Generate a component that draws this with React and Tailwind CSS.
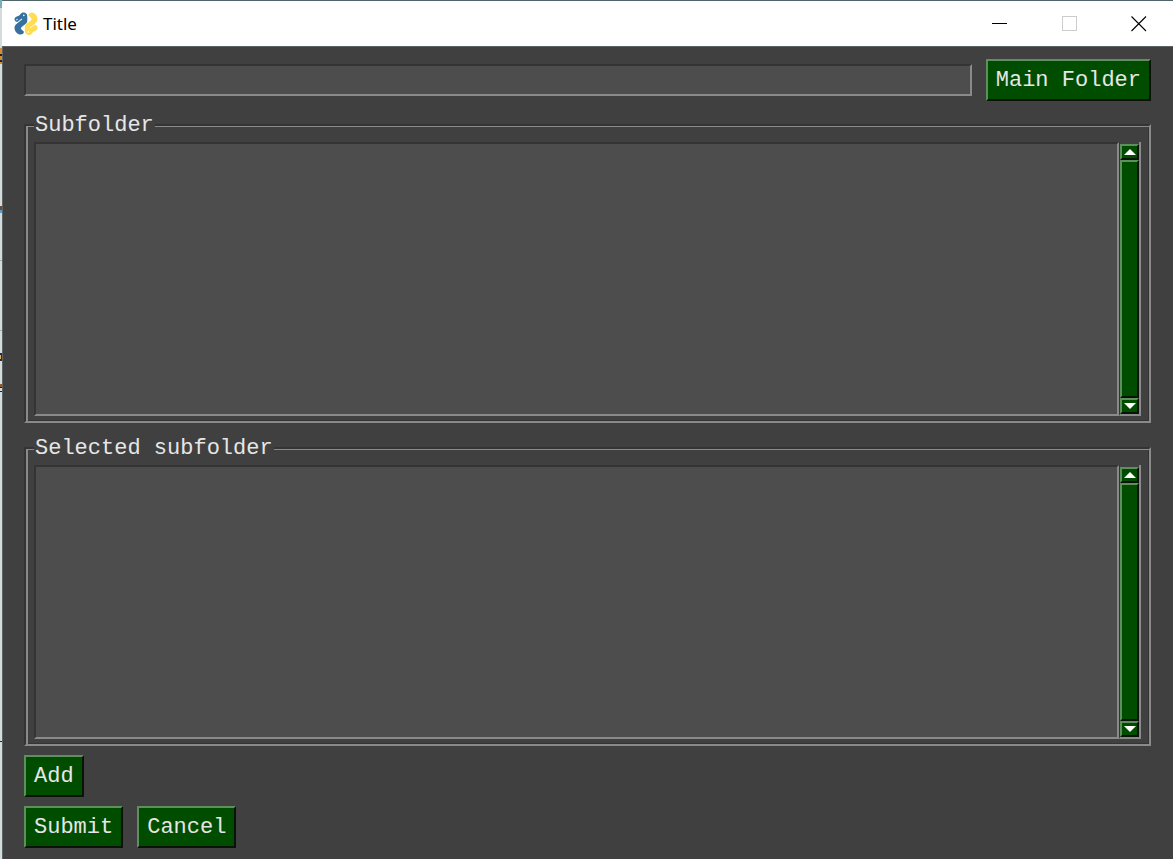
import React from "react";

function PythonLogo() {
  return (
    <svg viewBox="0 0 24 24" className="h-6 w-6" aria-hidden="true">
      <path
        d="M6.500 2C7.500.3 9.500 0 11 .8 12.800 1.600 13.300 3 13.300 4.600V8.500C13.300 10.200 12.500 11.300 11.200 12.300L8 14.800C6.900 15.700 6.600 16.500 7.200 17.300L9.800 19.500C10.300 21.500 8 23 5.500 22.500 2.600 21.800.5 19 .5 15.800.5 13.500 2 12.200 3.600 11L8.300 7.300 7.800 6.600 3.300 10.100C1.200 9.900.3 8.400.6 6.600 1 4.400 3.300 4.600 4.700 3.700 5.600 3.200 6 2.700 6.500 2Z"
        fill="#3670a0"
      />
      <path
        d="M14.300 3.200C15 1.100 16.900.2 18.700.7 21.400 1.400 23.500 4 23.500 7.100 23.500 9.400 22.400 10.700 20.800 11.900L15.700 15.600 16.200 16.300 20.800 12.800C22.800 13 23.800 14.600 23.500 16.500 23.200 18.700 20.900 18.800 19.500 19.800 18.300 20.700 18 22.200 16.500 22.800 13.500 23.800 10.800 21.800 10.800 18.800V15C10.800 13.400 11.600 12.400 12.800 11.500L16.700 8.400C17.700 7.600 17.800 6.700 17 6Z"
        fill="#ffdc52"
      />
      <circle cx="9.800" cy="3.400" r=".8" fill="#fff" />
      <circle cx="3" cy="7.500" r=".7" fill="#fff" />
      <circle cx="14.400" cy="19.900" r=".8" fill="#fff" />
    </svg>
  );
}

function TitleBar() {
  return (
    <header className="flex h-[47px] shrink-0 items-center border-t border-b border-t-[#50666b] border-b-[#5c6263] bg-white pl-3">
      <PythonLogo />
      <h1 className="ml-[5px] grow pt-px font-['Noto_Sans',sans-serif] text-[17px] leading-6 text-black">Title</h1>
      <button type="button" aria-label="Minimize" className="flex h-full w-[70px] items-center justify-center">
        <svg viewBox="0 0 16 16" className="h-4 w-4" shapeRendering="crispEdges">
          <path d="M0 7.500H15" stroke="#000" />
        </svg>
      </button>
      <button type="button" aria-label="Maximize" disabled className="flex h-full w-[70px] items-center justify-center">
        <svg viewBox="0 0 16 16" className="h-4 w-4" shapeRendering="crispEdges">
          <rect x=".5" y=".5" width="14" height="14" fill="none" stroke="#ccc" />
        </svg>
      </button>
      <button type="button" aria-label="Close" className="flex h-full w-[68px] items-center justify-center">
        <svg viewBox="0 0 16 16" className="h-4 w-4">
          <path d="M.5.5 15 15M15 .5.5 15" stroke="#000" strokeWidth="1.100" />
        </svg>
      </button>
    </header>
  );
}

function Button({ children }) {
  return (
    <button
      type="button"
      className="h-[42px] shrink-0 border-2 border-t-[#5f8f5f] border-r-[#0a120a] border-b-[#0a120a] border-l-[#5f8f5f] bg-[#004d00] px-2 pt-[2px] leading-6"
    >
      {children}
    </button>
  );
}

function Arrow({ down }) {
  return (
    <button
      type="button"
      aria-label={down ? "Scroll down" : "Scroll up"}
      className="flex h-4 w-full shrink-0 items-center justify-center border-2 border-t-[#5f8f5f] border-r-[#0a120a] border-b-[#0a120a] border-l-[#5f8f5f] bg-[#004d00]"
    >
      <svg viewBox="0 0 12 6" className="h-[6px] w-3 shrink-0">
        <path d={down ? "M0 0H12L6 6Z" : "M0 6H12L6 0Z"} fill="#fff" />
      </svg>
    </button>
  );
}

function ListFrame({ label }) {
  return (
    <fieldset className="flex min-h-40 flex-1 flex-col border-2 border-t-[#343434] border-r-[#8a8a8a] border-b-[#8a8a8a] border-l-[#343434] px-2 pt-[6px] pb-[5px] shadow-[inset_2px_1px_0_#8a8a8a,inset_-1px_-1px_0_#343434]">
      <legend className="h-[22px] bg-[#404040] px-[1px] leading-6">{label}</legend>
      <div className="flex h-full">
        <div
          role="listbox"
          aria-label={label}
          tabIndex={0}
          className="grow border-2 border-t-[#343434] border-r-[#8a8a8a] border-b-[#8a8a8a] border-l-[#343434] bg-[#4d4d4d]"
        />
        <div className="flex w-[22px] flex-col border-r-2 border-b-2 border-l border-r-[#8a8a8a] border-b-[#8a8a8a] border-l-[#343434] pt-[2px]">
          <Arrow />
          <div className="grow border-2 border-t-[#5f8f5f] border-r-[#0a120a] border-b-[#0a120a] border-l-[#5f8f5f] bg-[#004d00]" />
          <Arrow down />
        </div>
      </div>
    </fieldset>
  );
}

function DesktopEdge() {
  return (
    <div className="w-[2px] shrink-0 overflow-hidden bg-[#d5dadb]" aria-hidden="true">
      <svg width="2" height="859" shapeRendering="crispEdges">
        <rect width="2" height="8" fill="#79b0b8" />
        <rect y="48" width="2" height="16" fill="#d98a35" />
        <rect y="54" width="2" height="2" fill="#222" />
        <rect y="60" width="2" height="2" fill="#222" />
        <rect y="206" width="2" height="4" fill="#6b4a3a" />
        <rect y="210" width="2" height="3" fill="#5b9bd0" />
        <rect y="260" width="2" height="1" fill="#a5abad" />
        <rect y="330" width="2" height="1" fill="#a5abad" />
        <rect y="353" width="2" height="8" fill="#2a2a3a" />
        <rect y="355" width="1" height="4" fill="#e5b060" />
        <rect y="384" width="2" height="3" fill="#9a5a20" />
        <rect y="387" width="2" height="1" fill="#222" />
        <rect y="391" width="2" height="1" fill="#222" />
        <rect y="741" width="2" height="1" fill="#222" />
      </svg>
    </div>
  );
}

export default function App() {
  return (
    <div className="flex min-h-screen font-['Liberation_Mono',monospace] text-[22px] text-[#e6e6e6]">
      <DesktopEdge />
      <div className="flex grow flex-col">
        <TitleBar />
        <main className="flex grow flex-col border-l border-[#5c6668] bg-[#404040] pt-3 pr-[22px] pb-[11px] pl-[21px]">
          <div className="flex items-center gap-[14px]">
            <input
              aria-label="Main folder path"
              className="h-8 min-w-0 grow border-2 border-t-[#343434] border-r-[#8a8a8a] border-b-[#8a8a8a] border-l-[#343434] bg-[#4d4d4d] px-1 outline-none"
            />
            <Button>Main Folder</Button>
          </div>
          <div className="mt-[13px] flex grow flex-col gap-[14px]">
            <ListFrame label="Subfolder" />
            <ListFrame label="Selected subfolder" />
          </div>
          <div className="mt-[9px] flex">
            <Button>Add</Button>
          </div>
          <div className="mt-[9px] flex gap-[14px]">
            <Button>Submit</Button>
            <Button>Cancel</Button>
          </div>
        </main>
      </div>
    </div>
  );
}
